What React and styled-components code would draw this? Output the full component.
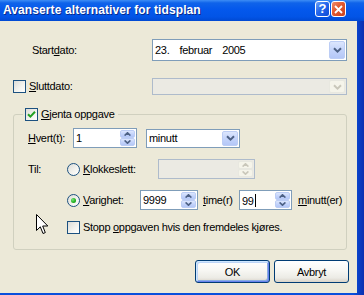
import React from 'react';
import styled, { createGlobalStyle, css } from 'styled-components';

const GlobalStyle = createGlobalStyle`
  html, body { margin: 0; padding: 0; background: #ECE9D8; overflow: hidden; }
  body { font-family: "Liberation Sans", Arial, sans-serif; font-size: 11px; color: #000; }
  * { box-sizing: border-box; }
`;

const Frame = styled.div`
  position: relative;
  width: 364px;
  height: 295px;
  display: flex;
  flex-direction: column;
  background: linear-gradient(90deg, #0A4FDC 0%, #0A4FDC 97%, #0A2FB0 100%);
  overflow: hidden;
`;

const TitleBar = styled.div`
  height: 21px;
  flex: none;
  display: flex;
  align-items: flex-start;
  padding: 0 18px 0 3px;
  background: linear-gradient(180deg, #3D8DF5 0%, #0F63EA 14%, #0458EC 45%, #0254E6 80%, #0049D2 100%);
`;

const Title = styled.div`
  margin-top: 3px;
  color: #fff;
  font-weight: bold;
  font-size: 12px;
  line-height: 15px;
  letter-spacing: 0.1px;
  text-shadow: 1px 1px 0 #0A2A8C;
  white-space: nowrap;
`;

const TitleButtons = styled.div`
  margin-left: auto;
  margin-top: 1px;
  display: flex;
  gap: 1px;
`;

const CaptionButton = styled.div`
  width: 15px;
  height: 16px;
  border: 1px solid #fff;
  border-radius: 3px;
  display: flex;
  align-items: center;
  justify-content: center;
  color: #fff;
  font-weight: bold;
  font-size: 13px;
  line-height: 14px;
  ${({ $kind }) =>
    $kind === 'close'
      ? css`background: linear-gradient(135deg, #F08C6C 0%, #E2582F 45%, #C9431F 100%);`
      : css`background: linear-gradient(135deg, #6FA2F8 0%, #2567EC 45%, #0C4AD6 100%);`}
`;

const Body = styled.div`
  flex: 1;
  margin: 0 7px 2px 0;
  background: #ECE9D8;
  display: flex;
  flex-direction: column;
  letter-spacing: -0.3px;
`;

const Row = styled.div`
  display: flex;
  align-items: center;
  flex: none;
  height: ${({ $h }) => $h}px;
  margin-top: ${({ $mt }) => $mt}px;
  padding-left: ${({ $pl }) => $pl || 0}px;
`;

const Label = styled.span`
  display: inline-block;
  flex: none;
  white-space: nowrap;
  line-height: 13px;
  width: ${({ $w }) => ($w ? `${$w}px` : 'auto')};
  padding-left: ${({ $pl }) => $pl || 0}px;
  margin-left: ${({ $ml }) => $ml || 0}px;
`;

const Field = styled.div`
  flex: none;
  display: flex;
  align-items: stretch;
  width: ${({ $w }) => $w}px;
  height: ${({ $h }) => $h}px;
  margin-left: ${({ $ml }) => $ml || 0}px;
  border: 1px solid ${({ $disabled }) => ($disabled ? '#AEBBCB' : '#7F9DB9')};
  background: ${({ $disabled }) => ($disabled ? '#EBEAE3' : '#fff')};
`;

const FieldText = styled.div`
  flex: 1;
  display: flex;
  align-items: center;
  gap: 10px;
  padding-left: 2px;
  white-space: nowrap;
  overflow: hidden;
`;

const Caret = styled.span`
  display: inline-block;
  width: 1px;
  height: 13px;
  background: #000;
  margin-left: 1px;
  vertical-align: -2px;
`;

const DropButton = styled.div`
  flex: none;
  width: 16px;
  margin: 1px;
  border-radius: 2px;
  display: flex;
  align-items: center;
  justify-content: center;
  ${({ $disabled }) =>
    $disabled
      ? css`
          border: 1px solid #E8E8E0;
          background: #F5F4EA;
        `
      : css`
          border: 1px solid #BCCDF5;
          background: linear-gradient(180deg, #DCE6FD 0%, #C4D4FB 50%, #B4C7F7 100%);
        `}
`;

const SpinColumn = styled.div`
  flex: none;
  width: 15px;
  margin: 1px 1px 1px 0;
  display: flex;
  flex-direction: column;
`;

const SpinBtn = styled.div`
  flex: 1;
  border-radius: 2px;
  display: flex;
  align-items: center;
  justify-content: center;
  ${({ $disabled }) =>
    $disabled
      ? css`
          border: 1px solid #E8E8E0;
          background: #F5F4EA;
        `
      : css`
          border: 1px solid #BCCDF5;
          background: linear-gradient(180deg, #DCE6FD 0%, #C4D4FB 50%, #B4C7F7 100%);
        `}
`;

const Box = styled.span`
  flex: none;
  width: 13px;
  height: 13px;
  border: 1px solid #1C5180;
  background: linear-gradient(135deg, #DCDCD7 0%, #F4F4F0 60%, #FFFFFF 100%);
  display: inline-flex;
  align-items: center;
  justify-content: center;
  border-radius: ${({ $round }) => ($round ? '50%' : '0')};
  margin-right: 3px;
`;

const Dot = styled.span`
  width: 5px;
  height: 5px;
  border-radius: 50%;
  background: radial-gradient(circle at 35% 35%, #7BE37A 0%, #22B322 55%, #0B8A0B 100%);
`;

const Group = styled.fieldset`
  margin: 13px 10px 0 13px;
  padding: 0 0 15px 0;
  border: 1px solid #D0D0BF;
  border-radius: 3px;
  min-width: 0;
`;

const Legend = styled.legend`
  margin-left: 9px;
  padding: 0 4px 0 2px;
  height: 13px;
  display: flex;
  align-items: center;
  line-height: 13px;
`;

const ButtonBar = styled.div`
  display: flex;
  justify-content: flex-end;
  gap: 4px;
  margin-top: 10px;
  padding-right: 8px;
`;

const PushButton = styled.button`
  width: 75px;
  height: 23px;
  padding: 0;
  font-family: inherit;
  font-size: 11px;
  letter-spacing: inherit;
  color: #000;
  border: 1px solid #003C74;
  border-radius: 3px;
  background: linear-gradient(180deg, #FFFFFF 0%, #F7F7F3 45%, #ECEBE5 80%, #D8D3C8 100%);
  ${({ $default }) =>
    $default &&
    css`
      box-shadow: inset 1px 1px 0 #CEE7FF, inset -1px -1px 0 #6982EE, inset 2px 2px 0 #BCD4F6, inset -2px -2px 0 #89ADE4;
    `}
`;

const Cursor = styled.svg`
  position: absolute;
  left: 36px;
  top: 214px;
`;

const Key = styled.u`
  text-decoration: underline;
  text-underline-offset: 1px;
`;

const Down = ({ color = '#4D6185' }) => (
  <svg width="9" height="6" viewBox="0 0 9 6">
    <path d="M1 1.2 L4.5 4.6 L8 1.2" fill="none" stroke={color} strokeWidth="2" />
  </svg>
);

const SpinArrow = ({ up, color = '#4D6185' }) => (
  <svg width="7" height="4" viewBox="0 0 7 4">
    <path d={up ? 'M0.6 3.6 L3.5 0.8 L6.4 3.6' : 'M0.6 0.4 L3.5 3.2 L6.4 0.4'} fill="none" stroke={color} strokeWidth="1.6" />
  </svg>
);

const Check = () => (
  <svg width="9" height="9" viewBox="0 0 9 9">
    <path d="M1 4.2 L3.4 6.6 L8 1.8" fill="none" stroke="#21A121" strokeWidth="2" />
  </svg>
);

const Combo = ({ w, h, ml, disabled, children }) => (
  <Field $w={w} $h={h} $ml={ml} $disabled={disabled}>
    <FieldText>{children}</FieldText>
    <DropButton $disabled={disabled}>
      <Down color={disabled ? '#C9C7BA' : '#4D6185'} />
    </DropButton>
  </Field>
);

const Spin = ({ w, h, ml, disabled, children }) => (
  <Field $w={w} $h={h} $ml={ml} $disabled={disabled}>
    <FieldText>{children}</FieldText>
    <SpinColumn>
      <SpinBtn $disabled={disabled}>
        <SpinArrow up color={disabled ? '#C9C7BA' : '#4D6185'} />
      </SpinBtn>
      <SpinBtn $disabled={disabled}>
        <SpinArrow color={disabled ? '#C9C7BA' : '#4D6185'} />
      </SpinBtn>
    </SpinColumn>
  </Field>
);

export default function App() {
  return (
    <>
      <GlobalStyle />
      <Frame>
        <TitleBar>
          <Title>Avanserte alternativer for tidsplan</Title>
          <TitleButtons>
            <CaptionButton>?</CaptionButton>
            <CaptionButton $kind="close">
              <svg width="9" height="9" viewBox="0 0 9 9">
                <path d="M1 1 L8 8 M8 1 L1 8" stroke="#fff" strokeWidth="1.8" />
              </svg>
            </CaptionButton>
          </TitleButtons>
        </TitleBar>
        <Body>
          <Row $h={22} $mt={18}>
            <Label $w={152} $pl={32}>
              Start<Key>d</Key>ato:
            </Label>
            <Combo w={195} h={22}>
              <span>23.</span>
              <span>februar</span>
              <span>2005</span>
            </Combo>
          </Row>
          <Row $h={17} $mt={17} $pl={13}>
            <Box />
            <Label $w={123}>
              <Key>S</Key>luttdato:
            </Label>
            <Combo w={195} h={17} disabled />
          </Row>
          <Group>
            <Legend>
              <Box>
                <Check />
              </Box>
              <Label>
                <Key>G</Key>jenta oppgave
              </Label>
            </Legend>
            <Row $h={20} $mt={7} $pl={14}>
              <Label $w={45}>
                <Key>H</Key>vert(t):
              </Label>
              <Spin w={64} h={20}>1</Spin>
              <Combo w={94} h={19} ml={9}>
                minutt
              </Combo>
            </Row>
            <Row $h={20} $mt={11} $pl={14}>
              <Label $w={39}>Til:</Label>
              <Box $round />
              <Label $w={75}>
                <Key>K</Key>lokkeslett:
              </Label>
              <Spin w={97} h={20} disabled />
            </Row>
            <Row $h={20} $mt={11} $pl={53}>
              <Box $round>
                <Dot />
              </Box>
              <Label $w={57}>
                <Key>V</Key>arighet:
              </Label>
              <Spin w={58} h={20}>9999</Spin>
              <Label $w={36} $ml={5}>
                <Key>t</Key>ime(r)
              </Label>
              <Spin w={53} h={20}>
                <span>
                  99
                  <Caret />
                </span>
              </Spin>
              <Label $ml={6}>
                <Key>m</Key>inutt(er)
              </Label>
            </Row>
            <Row $h={13} $mt={11} $pl={53}>
              <Box />
              <Label>
                Stopp <Key>o</Key>ppgaven hvis den fremdeles kjøres.
              </Label>
            </Row>
          </Group>
          <ButtonBar>
            <PushButton $default>OK</PushButton>
            <PushButton>Avbryt</PushButton>
          </ButtonBar>
        </Body>
        <Cursor width="13" height="21" viewBox="0 0 13 21">
          <path d="M0.5 0.5 L0.5 16.5 L4.3 12.8 L7 19.5 L9.3 18.6 L6.7 12 L11.8 12 Z" fill="#fff" stroke="#000" strokeWidth="1" strokeLinejoin="miter" />
        </Cursor>
      </Frame>
    </>
  );
}
